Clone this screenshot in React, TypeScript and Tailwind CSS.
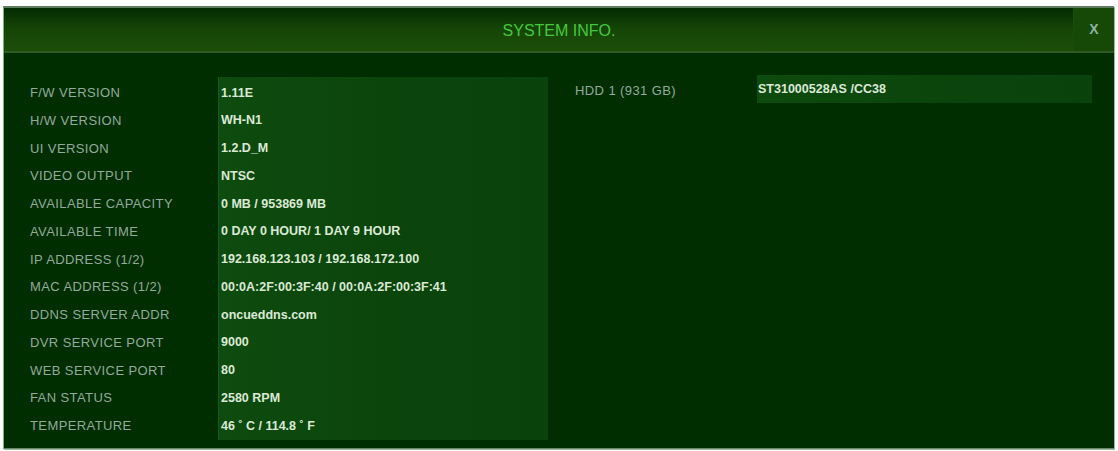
import React from 'react';

const LEFT_ROWS: [string, string][] = [
    ['F/W VERSION', '1.11E'],
    ['H/W VERSION', 'WH-N1'],
    ['UI VERSION', '1.2.D_M'],
    ['VIDEO OUTPUT', 'NTSC'],
    ['AVAILABLE CAPACITY', '0 MB / 953869 MB'],
    ['AVAILABLE TIME', '0 DAY 0 HOUR/ 1 DAY 9 HOUR'],
    ['IP ADDRESS (1/2)', '192.168.123.103 / 192.168.172.100'],
    ['MAC ADDRESS (1/2)', '00:0A:2F:00:3F:40 / 00:0A:2F:00:3F:41'],
    ['DDNS SERVER ADDR', 'oncueddns.com'],
    ['DVR SERVICE PORT', '9000'],
    ['WEB SERVICE PORT', '80'],
    ['FAN STATUS', '2580 RPM'],
    ['TEMPERATURE', '46 ˚ C / 114.8 ˚ F'],
];

const font = { fontFamily: '"Liberation Sans", Arial, sans-serif' };

export default function App() {
    return (
        <div className="w-[1118px] h-[451px] bg-white pt-[6px] pl-[3px]" style={font}>
            <div className="w-[1111px] h-[443px] flex flex-col bg-[#002e00] border-t-2 border-t-[#5e7d5e] border-l border-l-[#7ab87a] border-b border-b-[#6a8a6a] shadow-[1px_1px_0_#9fb89f]">
                {/* Header */}
                <div className="relative h-[45px] flex items-center justify-center bg-gradient-to-b from-[#032c02] via-[#164607] to-[#1b4e09] border-b-2 border-b-[#2f5a22]">
                    <span className="text-[16px] text-[#45c83e] mt-[2px]">SYSTEM INFO.</span>
                    <div className="absolute right-0 top-0 h-full w-[41px] flex items-center justify-center border-l border-l-[#1e4a10] bg-[#164807]">
                        <span className="text-[14px] font-bold text-[#8fb3a2]">X</span>
                    </div>
                </div>

                {/* Body */}
                <div className="flex pt-[24px]">
                    {/* Labels */}
                    <div className="w-[214px] pl-[26px] pt-[2px]">
                        {LEFT_ROWS.map(([label]) => (
                            <div key={label} className="h-[27.75px] flex items-center text-[13px] tracking-[0.4px] text-[#93aa9c]">
                                {label}
                            </div>
                        ))}
                    </div>

                    {/* Values */}
                    <div className="w-[330px] h-[363px] pt-[2px] pl-[2px] bg-gradient-to-r from-[#0e4b0e] via-[#0b450c] to-[#0a420b] border-l border-l-[#1c5a1a]">
                        {LEFT_ROWS.map(([label, value]) => (
                            <div key={label} className="h-[27.75px] flex items-center text-[12.5px] font-bold text-[#dbe9d6]">
                                {value}
                            </div>
                        ))}
                    </div>

                    {/* HDD */}
                    <div className="flex items-start">
                        <div className="w-[209px] pl-[27px] h-[28px] flex items-center text-[13px] tracking-[0.4px] text-[#93aa9c]">
                            HDD 1 (931 GB)
                        </div>
                        <div className="w-[335px] h-[28px] -mt-[2px] pl-[1px] flex items-center bg-gradient-to-r from-[#0e4b0e] via-[#0b450c] to-[#0a420b] text-[12.5px] font-bold text-[#dbe9d6]">
                            ST31000528AS /CC38
                        </div>
                    </div>
                </div>
            </div>
        </div>
    );
}
